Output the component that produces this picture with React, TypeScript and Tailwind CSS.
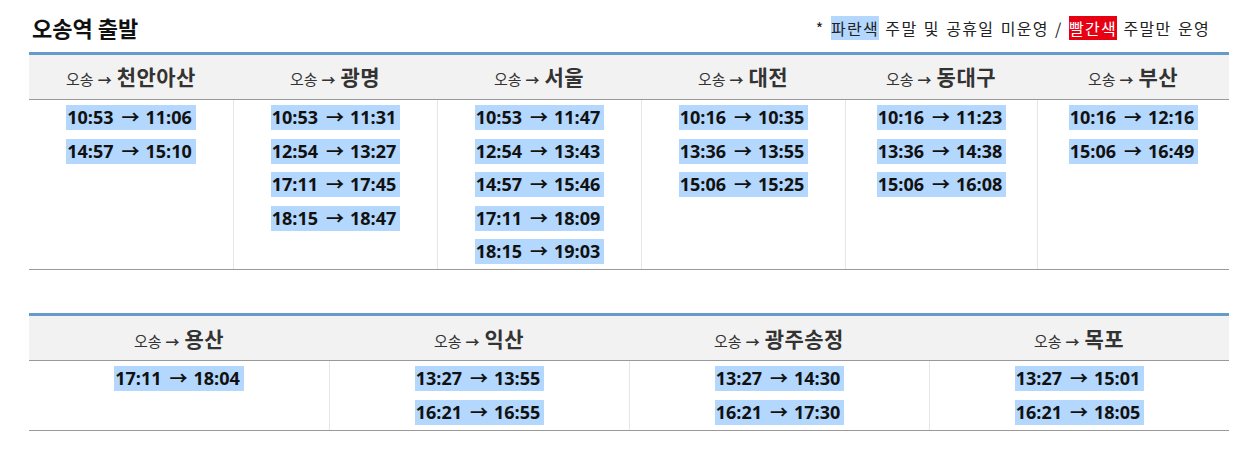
const KR = "font-['Noto_Sans_CJK_KR',sans-serif]";
const TIME = "font-['Open_Sans','Noto_Sans_CJK_KR',sans-serif]";

type Col = { dest: string; times: string[] };

const top: Col[] = [
  { dest: '천안아산', times: ['10:53 11:06', '14:57 15:10'] },
  { dest: '광명', times: ['10:53 11:31', '12:54 13:27', '17:11 17:45', '18:15 18:47'] },
  { dest: '서울', times: ['10:53 11:47', '12:54 13:43', '14:57 15:46', '17:11 18:09', '18:15 19:03'] },
  { dest: '대전', times: ['10:16 10:35', '13:36 13:55', '15:06 15:25'] },
  { dest: '동대구', times: ['10:16 11:23', '13:36 14:38', '15:06 16:08'] },
  { dest: '부산', times: ['10:16 12:16', '15:06 16:49'] },
];

const bottom: Col[] = [
  { dest: '용산', times: ['17:11 18:04'] },
  { dest: '익산', times: ['13:27 13:55', '16:21 16:55'] },
  { dest: '광주송정', times: ['13:27 14:30', '16:21 17:30'] },
  { dest: '목포', times: ['13:27 15:01', '16:21 18:05'] },
];

const HeadCell = ({ dest }: { dest: string }) => (
  <div className={`flex items-baseline justify-center text-[#333] ${KR}`}>
    <span className="text-[15px]">오송</span>
    <span className="text-[14px] font-bold ml-[4px] mr-[5px]">→</span>
    <span className="text-[21px] font-bold tracking-[0.5px]">{dest}</span>
  </div>
);

const Time = ({ t }: { t: string }) => {
  const [from, to] = t.split(' ');
  return (
    <span
      className={`flex items-center bg-[#b3d7fd] h-[25px] leading-[25px] pl-[1px] pr-[4px] text-[18px] font-bold text-[#111] ${TIME}`}
    >
      <span>{from}</span>
      <span className="w-[32px] text-center pl-[2px]">→</span>
      <span>{to}</span>
    </span>
  );
};

const TimeCell = ({ times, first }: { times: string[]; first: boolean }) => (
  <div
    className={`flex flex-col items-center gap-[8.6px] pt-[5px] pb-[5px] ${
      first ? '' : 'border-l border-[#e6e6e6]'
    }`}
  >
    {times.map((t, i) => (
      <Time key={i} t={t} />
    ))}
  </div>
);

const Schedule = ({ cols, grid }: { cols: Col[]; grid: string }) => (
  <div className="w-[1200px] ml-[29px] border-t-[3px] border-[#6699cc] border-b border-b-[#999]">
    <div className={`grid ${grid} h-[45px] bg-[#f2f2f2] border-b border-[#999] items-center`}>
      {cols.map((c) => (
        <HeadCell key={c.dest} dest={c.dest} />
      ))}
    </div>
    <div className={`grid ${grid}`}>
      {cols.map((c, i) => (
        <TimeCell key={c.dest} times={c.times} first={i === 0} />
      ))}
    </div>
  </div>
);

export default function App() {
  return (
    <div className={`w-[1255px] h-[451px] bg-white ${KR}`}>
      <div className="h-[52px] ml-[32px] mr-[45px] pt-[3px] flex items-center justify-between">
        <h2 className="text-[22px] font-bold text-[#111]">오송역 출발</h2>
        <p className="text-[16px] text-[#222] tracking-[1.3px] [word-spacing:1.5px]">
          * <span className="bg-[#b3d7fd]">파란색</span> 주말 및 공휴일 미운영 /{' '}
          <span className="bg-[#e60012] text-white">빨간색</span> 주말만 운영
        </p>
      </div>
      <Schedule cols={top} grid="grid-cols-[204px_204px_204px_204px_192px_192px]" />
      <div className="h-[43px]" />
      <Schedule cols={bottom} grid="grid-cols-4" />
    </div>
  );
}
